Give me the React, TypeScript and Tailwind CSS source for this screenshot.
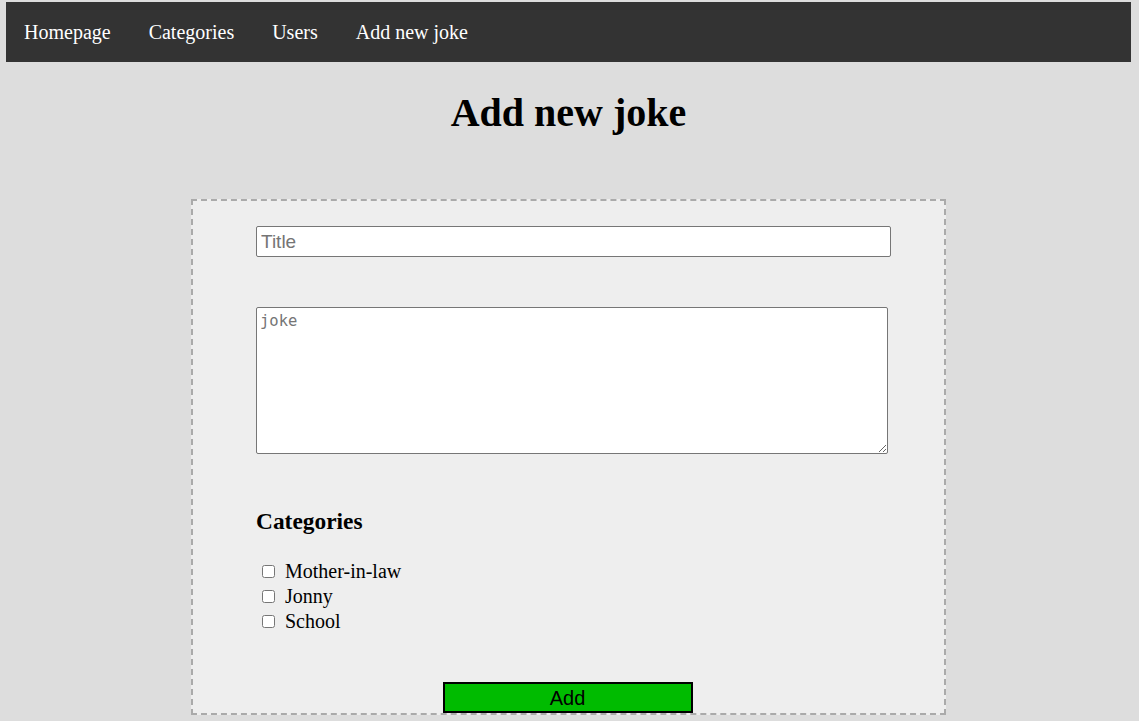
import React from "react";

export default function App() {
  const cats = ["Mother-in-law", "Jonny", "School"];
  return (
    <div
      className="min-h-[721px] w-full bg-[#dddddd] pt-[2px] pl-[6px] pr-[8px] text-[20px] text-black"
      style={{ fontFamily: '"Liberation Serif", "Times New Roman", serif' }}
    >
      <nav className="flex h-[60px] items-center gap-[38px] bg-[#333333] pl-[18px] text-white">
        <a className="leading-[23px]">Homepage</a>
        <a className="leading-[23px]">Categories</a>
        <a className="leading-[23px]">Users</a>
        <a className="leading-[23px]">Add new joke</a>
      </nav>

      <h1 className="mt-[28px] text-center text-[40px] font-bold leading-[46px]">Add new joke</h1>

      <form className="mx-auto mt-[63px] w-[755px] border-2 border-dashed border-[#aaaaaa] bg-[#eeeeee] pl-[63px] pt-[25px]">
        <input
          type="text"
          placeholder="Title"
          className="block h-[31px] w-[635px] rounded-[2px] border border-[#767676] bg-white pl-[4px] text-[19px] placeholder:text-[#757575] outline-none"
          style={{ fontFamily: '"Liberation Sans", Arial, sans-serif' }}
        />
        <textarea
          placeholder="joke"
          className="mt-[50px] block h-[147px] w-[632px] rounded-[2px] border border-[#767676] bg-white px-[3px] pt-[4px] text-[15.5px] leading-[19px] placeholder:text-[#757575] outline-none"
          style={{ fontFamily: '"DejaVu Sans Mono", "Liberation Mono", monospace' }}
        />
        <h3 className="mt-[54px] text-[23.4px] font-bold leading-[27px]">Categories</h3>
        <div className="mt-[24px] flex flex-col">
          {cats.map((c) => (
            <label key={c} className="flex h-[25px] items-center">
              <input
                type="checkbox"
                className="ml-[6px] mr-[10px] h-[13px] w-[13px] shrink-0"
              />
              <span className="leading-[23px]">{c}</span>
            </label>
          ))}
        </div>
        <div className="-ml-[63px] flex justify-center pt-[48px]">
          <button
            type="button"
            className="mr-[2px] h-[31px] w-[250px] border-2 border-black bg-[#00bb00] text-[20px] leading-[24px] text-black"
            style={{ fontFamily: '"Liberation Sans", Arial, sans-serif' }}
          >
            Add
          </button>
        </div>
      </form>
    </div>
  );
}
